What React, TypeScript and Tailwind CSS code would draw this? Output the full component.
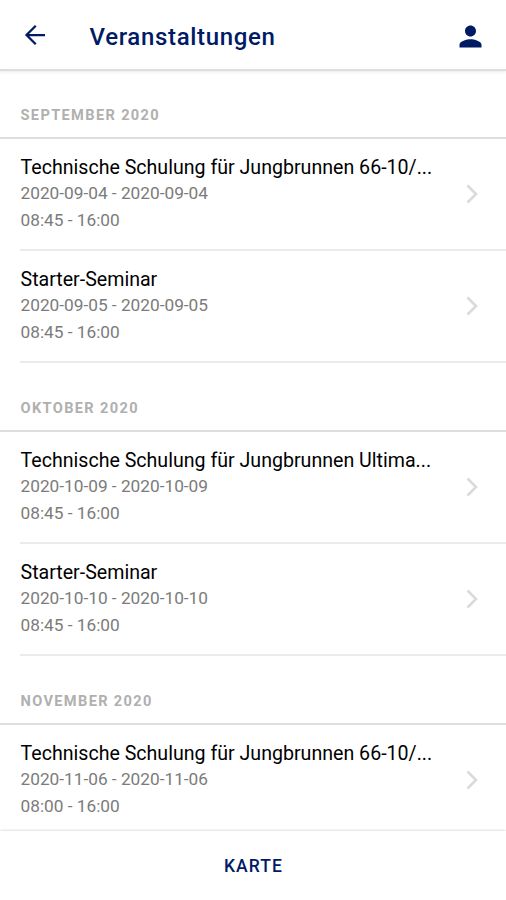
import { ReactNode } from "react";

interface EventItem {
    title: string;
    date: string;
    time: string;
}

interface EventGroup {
    month: string;
    events: EventItem[];
}

const groups: EventGroup[] = [
    {
        month: "SEPTEMBER 2020",
        events: [
            { title: "Technische Schulung für Jungbrunnen 66-10/...", date: "2020-09-04 - 2020-09-04", time: "08:45 - 16:00" },
            { title: "Starter-Seminar", date: "2020-09-05 - 2020-09-05", time: "08:45 - 16:00" },
        ],
    },
    {
        month: "OKTOBER 2020",
        events: [
            { title: "Technische Schulung für Jungbrunnen Ultima...", date: "2020-10-09 - 2020-10-09", time: "08:45 - 16:00" },
            { title: "Starter-Seminar", date: "2020-10-10 - 2020-10-10", time: "08:45 - 16:00" },
        ],
    },
    {
        month: "NOVEMBER 2020",
        events: [
            { title: "Technische Schulung für Jungbrunnen 66-10/...", date: "2020-11-06 - 2020-11-06", time: "08:00 - 16:00" },
        ],
    },
];

function IconButton({ label, children }: { label: string; children: ReactNode }) {
    return (
        <button aria-label={label} className="flex size-8 items-center justify-center text-[#001a66]">
            {children}
        </button>
    );
}

function Header() {
    return (
        <header className="z-10 flex h-[69px] shrink-0 items-center bg-white pr-5 pl-[19px] shadow-[0_2px_1px_#dedede,0_4px_3px_rgba(0,0,0,0.05)]">
            <IconButton label="Zurück">
                <svg viewBox="0 0 24 24" className="size-[30px]" fill="none" stroke="currentColor" strokeWidth="1.8">
                    <path d="M20 12H5.6M12.6 4.6 5.2 12l7.4 7.4" />
                </svg>
            </IconButton>
            <h1 className="ml-[38.5px] flex-1 pt-1 text-2xl font-medium tracking-[0.66px] text-[#001a66]">Veranstaltungen</h1>
            <IconButton label="Profil">
                <svg viewBox="0 0 24 24" className="mt-[3px] size-[33px] shrink-0" fill="currentColor">
                    <path d="M12 12c2.21 0 4-1.79 4-4s-1.79-4-4-4-4 1.79-4 4 1.79 4 4 4zm0 2c-2.67 0-8 1.34-8 4v2h16v-2c0-2.66-5.33-4-8-4z" />
                </svg>
            </IconButton>
        </header>
    );
}

function EventRow({ event }: { event: EventItem }) {
    return (
        <li className="ml-5 flex h-28 items-center justify-between border-b-2 border-[#ebebeb] pr-7">
            <div className="pl-[0.5px]">
                <h3 className="text-[19.6px] leading-[25px] whitespace-nowrap text-black">{event.title}</h3>
                <p className="text-[17.25px] leading-[26px] text-[#7b7b7b]">{event.date}</p>
                <p className="pt-px text-[17.25px] leading-[26px] text-[#7b7b7b]">{event.time}</p>
            </div>
            <svg viewBox="0 0 12 20" className="h-5 w-3" fill="none" stroke="#dadada" strokeWidth="2.6">
                <path d="M1.5 1.5 10 10l-8.5 8.5" />
            </svg>
        </li>
    );
}

export default function App() {
    return (
        <div className="flex h-[900px] w-[506px] flex-col overflow-hidden bg-white font-[Roboto,sans-serif]">
            <Header />
            <main className="min-h-0 flex-1 overflow-hidden pt-px">
                {groups.map((group) => (
                    <section key={group.month}>
                        <h2 className="flex h-[69px] items-end border-b-2 border-[#dedede] pb-2.5 pl-[20.5px] text-[14.6px] font-bold tracking-[1.35px] text-[#b0b0b0]">
                            {group.month}
                        </h2>
                        <ul>
                            {group.events.map((event) => (
                                <EventRow key={event.date} event={event} />
                            ))}
                        </ul>
                    </section>
                ))}
            </main>
            <footer className="z-10 flex h-[69px] shrink-0 items-center justify-center bg-white pt-0.5 pl-px shadow-[0_-1px_2px_rgba(0,0,0,0.12)]">
                <button className="text-[17.5px] font-medium tracking-[1.1px] text-[#001a66]">KARTE</button>
            </footer>
        </div>
    );
}
